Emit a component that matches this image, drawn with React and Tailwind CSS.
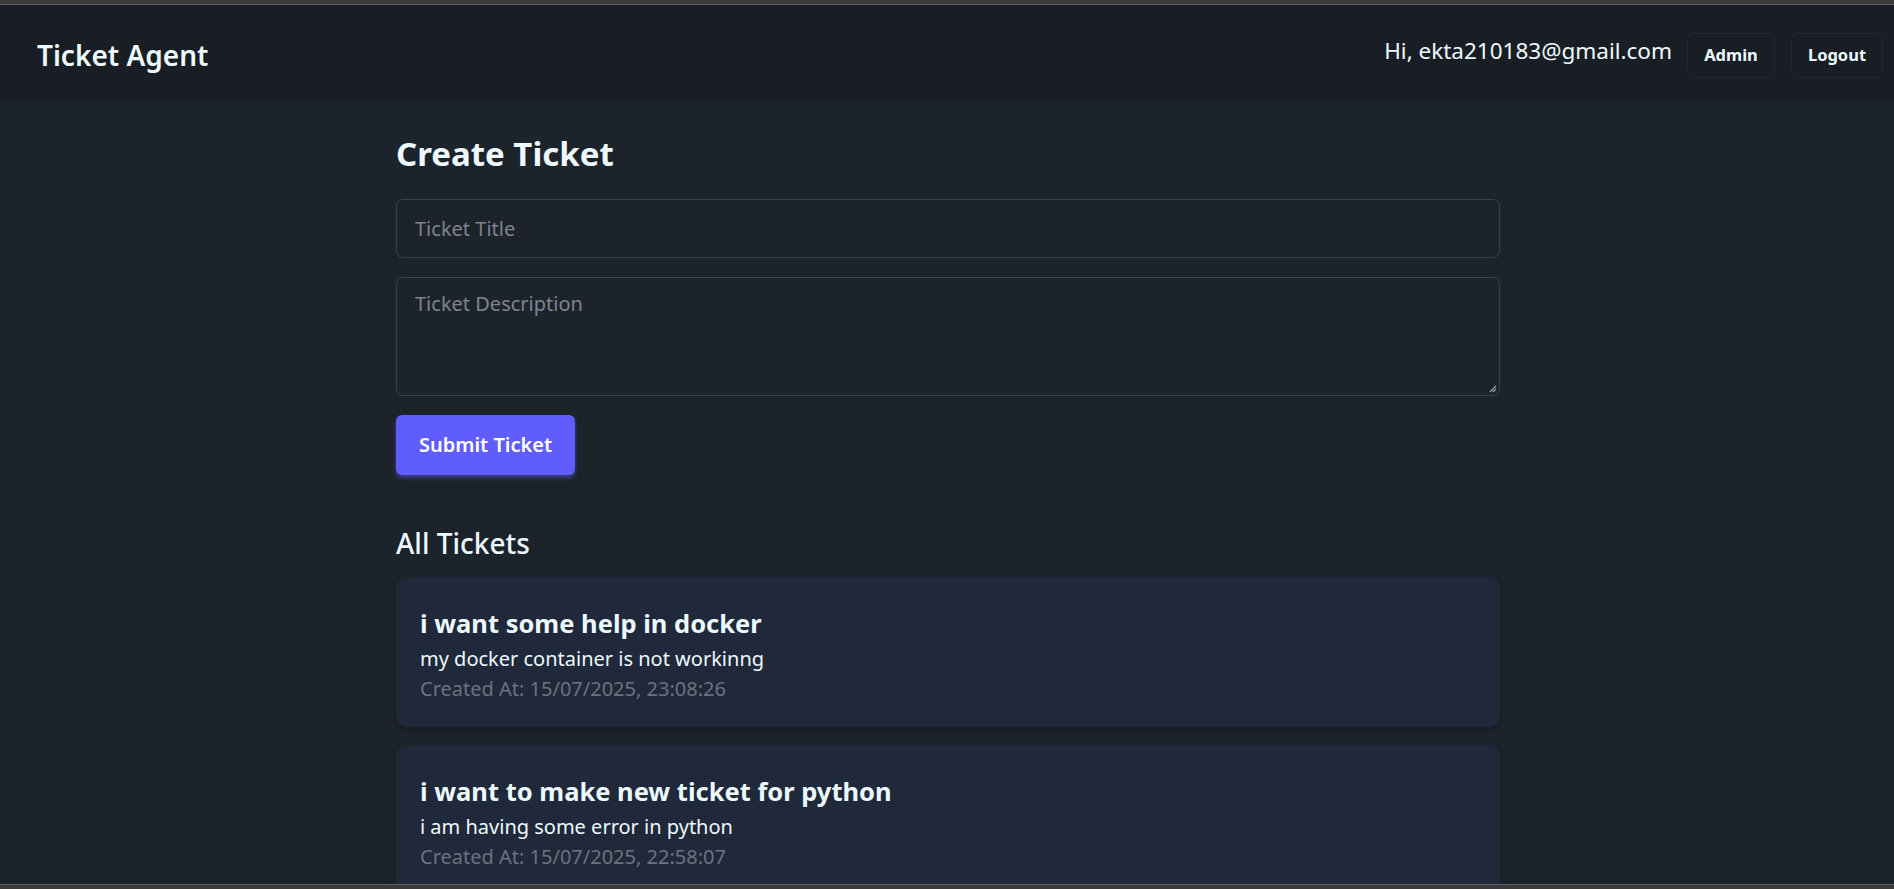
export default function App() {
  const tickets = [
    {
      title: "i want some help in docker",
      desc: "my docker container is not workinng",
      created: "15/07/2025, 23:08:26",
    },
    {
      title: "i want to make new ticket for python",
      desc: "i am having some error in python",
      created: "15/07/2025, 22:58:07",
    },
  ];
  return (
    <div
      className="h-[889px] overflow-hidden flex flex-col bg-[#1d232a] text-[#ecf9ff]"
      style={{ fontFamily: '"Noto Sans", "Open Sans", sans-serif' }}
    >
      <div className="h-[4px] bg-[#3b3b3b] shrink-0" />
      <div className="h-[1px] bg-[#5c5c5c] shrink-0" />
      <nav className="h-[97px] shrink-0 bg-[#191e24] flex items-center justify-between pl-[37px] pr-[11px]">
        <div className="text-[28px] font-semibold leading-none mt-[2px]">Ticket Agent</div>
        <div className="flex items-center">
          <span className="text-[22.5px] mr-[15px] -mt-[5px]">Hi, ekta210183@gmail.com</span>
          <button className="h-[45px] w-[88px] mt-[4px] rounded-[7px] border border-[#23282f] bg-[#191e24] text-[16.5px] font-bold">
            Admin
          </button>
          <button className="h-[45px] w-[92px] mt-[4px] ml-[16px] rounded-[7px] border border-[#23282f] bg-[#191e24] text-[16.5px] font-bold">
            Logout
          </button>
        </div>
      </nav>
      <main className="flex-1 overflow-hidden">
        <div className="w-[1104px] mx-auto pt-[32px] translate-x-[1px]">
          <h1 className="text-[33px] leading-[40px] font-bold">Create Ticket</h1>
          <div className="mt-[25px] h-[59px] rounded-[7px] border border-[#3c424a] bg-[#1d232a] flex items-center px-[18px]">
            <span className="text-[20px] text-[#7d848f]">Ticket Title</span>
          </div>
          <div className="relative mt-[19px] h-[119px] rounded-[7px] border border-[#3c424a] bg-[#1d232a] px-[18px] pt-[11px]">
            <span className="text-[20px] text-[#7d848f]">Ticket Description</span>
            <svg className="absolute right-[2px] bottom-[2px]" width="9" height="9" viewBox="0 0 9 9">
              <path d="M8 2 L2 8 M8 5 L5 8" stroke="#9aa0a8" strokeWidth="1.3" />
            </svg>
          </div>
          <button className="mt-[19px] h-[60px] w-[179px] rounded-[6px] bg-[#605dff] text-[20px] font-semibold text-white shadow-[0_3px_4px_rgba(96,93,255,0.45)]">
            Submit Ticket
          </button>
          <h2 className="mt-[51px] text-[28px] leading-[34px] font-medium">All Tickets</h2>
          <div className="mt-[17px] flex flex-col gap-[18px]">
            {tickets.map((t) => (
              <div
                key={t.title}
                className="h-[150px] shrink-0 rounded-[12px] bg-[#1f2939] shadow-[0_2px_6px_rgba(0,0,0,0.25)] px-[24px] pt-[29px]"
              >
                <div className="text-[25.5px] leading-[34px] font-bold">{t.title}</div>
                <div className="text-[20px] leading-[28px] mt-[5px]">{t.desc}</div>
                <div className="text-[20px] leading-[28px] mt-[2px] text-[#6b7280]">Created At: {t.created}</div>
              </div>
            ))}
          </div>
        </div>
      </main>
      <div className="h-[1px] bg-[#5c5c5c] shrink-0" />
      <div className="h-[4px] bg-[#3b3b3b] shrink-0" />
    </div>
  );
}
